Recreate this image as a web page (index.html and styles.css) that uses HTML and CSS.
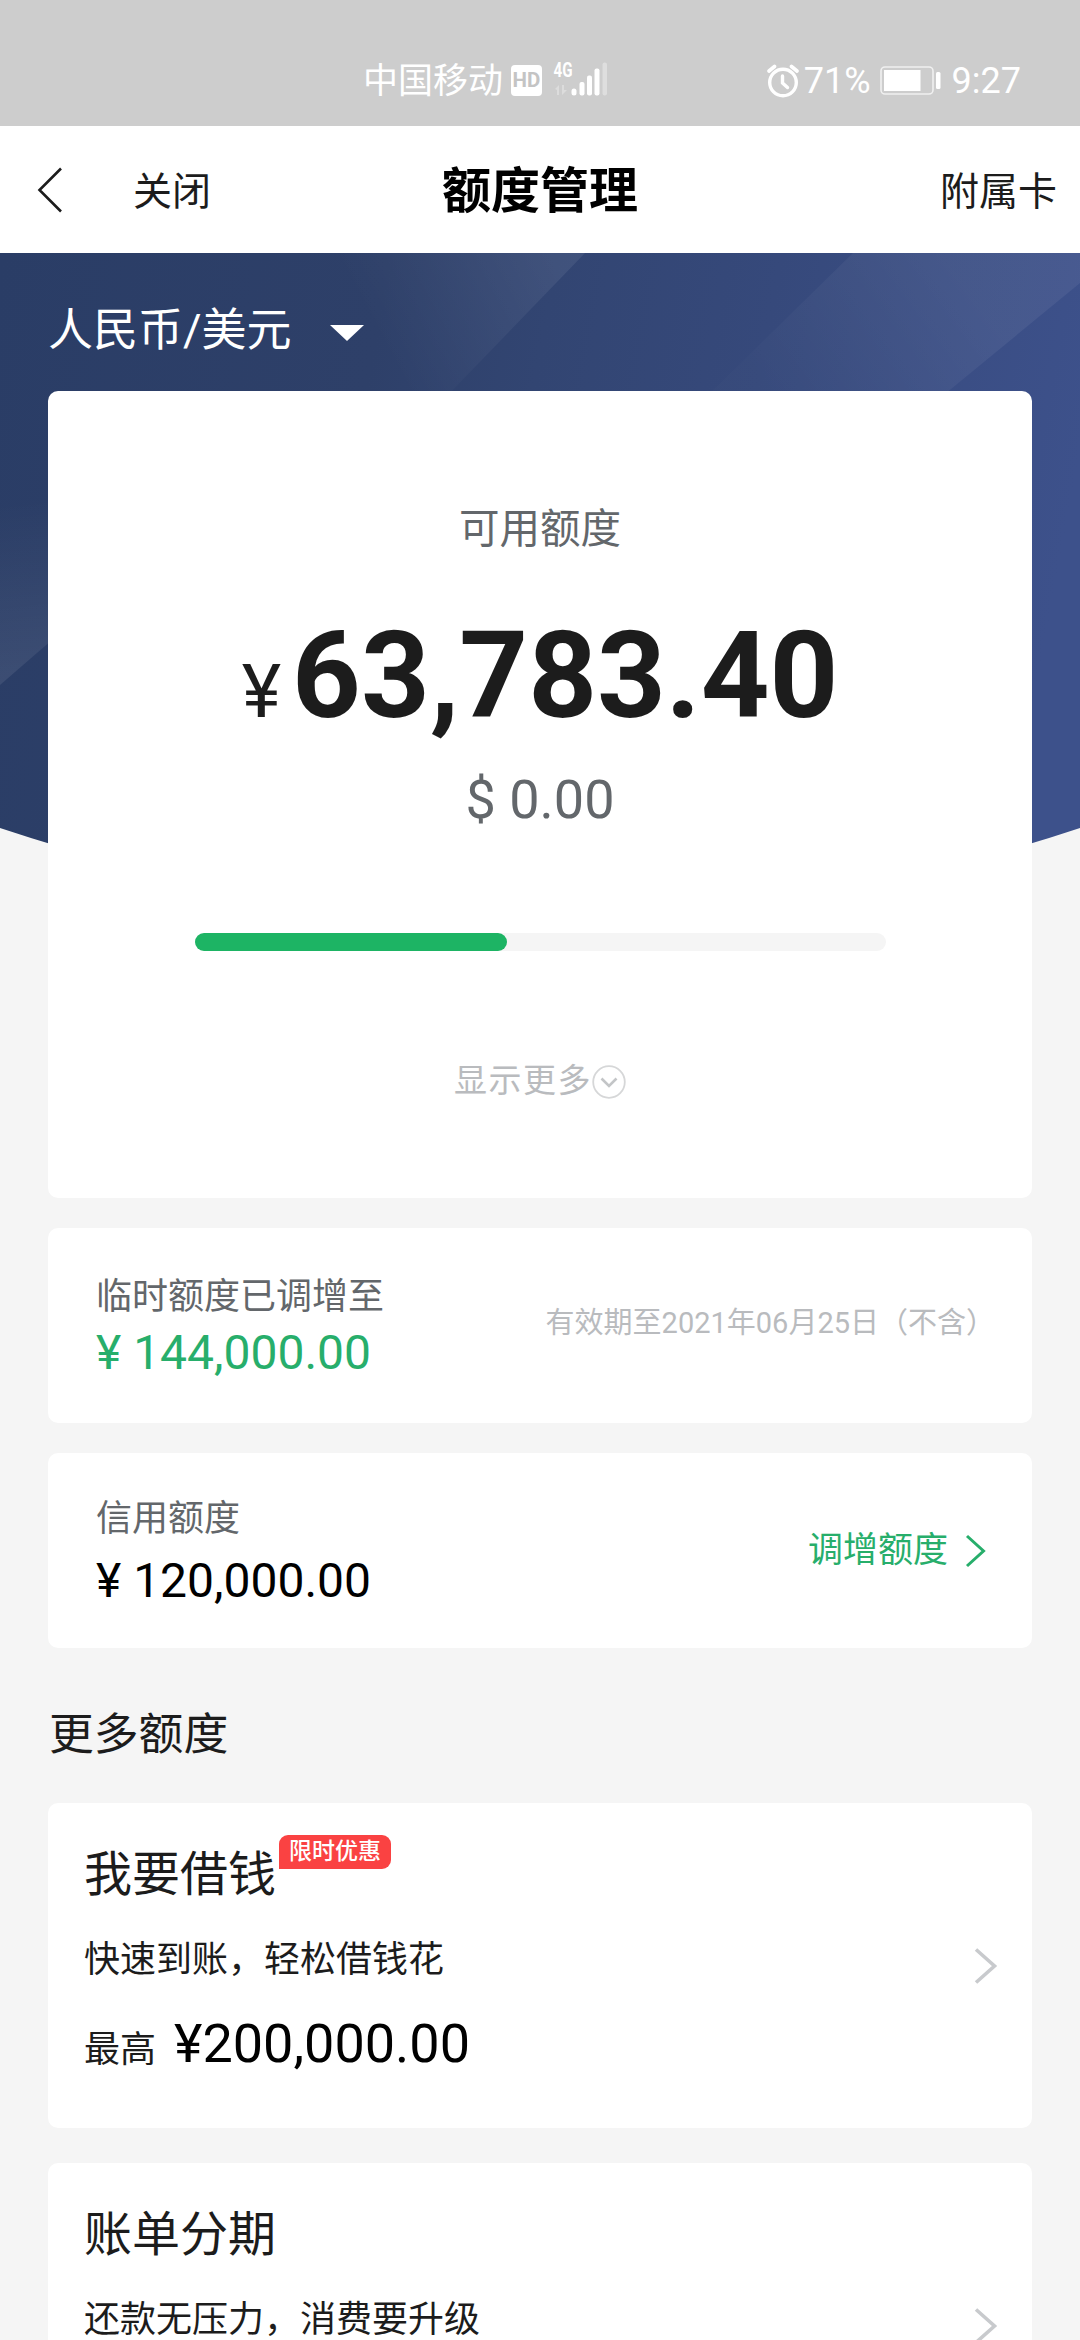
FILE: index.html
```html
<!DOCTYPE html>
<html lang="zh-CN">
<head>
<meta charset="utf-8">
<title>额度管理</title>
<link rel="stylesheet" href="styles.css">
</head>
<body>
<div class="screen">
  <header class="status">
    <div class="status-left">
      <span class="carrier">中国移动</span>
      <span class="hd">HD</span>
      <svg class="signal" width="56" height="38" viewBox="0 0 56 38">
        <text class="net" x="0.500" y="15.500" textLength="19" lengthAdjust="spacingAndGlyphs">4G</text>
        <g fill="#fff">
          <path opacity=".3" d="M2 28l4-4v10H4v-5zM9 24h2v5h3l-5 5z"/>
          <rect x="18.500" y="27.500" width="5" height="7" rx="2.500"/>
          <rect x="26.500" y="21" width="5" height="13.500" rx="2"/>
          <rect x="34" y="14.500" width="5" height="20" rx="2"/>
          <rect x="41.500" y="7.500" width="5" height="27" rx="2"/>
          <rect opacity=".35" x="49.500" y="1.500" width="4.500" height="33" rx="2"/>
        </g>
      </svg>
    </div>
    <div class="status-right">
      <svg class="alarm" width="34" height="34" viewBox="0 0 34 34" fill="none" stroke="#fff" stroke-linecap="round">
        <circle cx="17" cy="18.500" r="13.300" stroke-width="3.400"/>
        <path stroke-width="3.400" d="M16.500 12v7l5 4.500"/>
        <path stroke-width="3.600" d="M3 7l5.500-4.500M31 7l-5.500-4.500"/>
      </svg>
      <span class="pct">71%</span>
      <svg class="battery" width="62" height="30" viewBox="0 0 62 30">
        <rect x="1" y="1" width="52" height="27" rx="4" fill="none" stroke="#f0f0f0" stroke-width="1.600"/>
        <rect x="4" y="4" width="36.500" height="21" fill="#fff"/>
        <rect x="56" y="6" width="4.500" height="17" rx="1.500" fill="#fff"/>
      </svg>
      <span class="clock">9:27</span>
    </div>
  </header>

  <nav class="nav">
    <div class="nav-left">
      <svg width="26" height="46" viewBox="0 0 26 46" fill="none" stroke="#1c1c1c" stroke-width="2.600"><path d="M24 1.500L2.500 23L24 44.500"/></svg>
      <span>关闭</span>
    </div>
    <h1 class="title">额度管理</h1>
    <div class="nav-right">附属卡</div>
  </nav>

  <main class="page">
    <svg class="hero" width="1080" height="680" viewBox="0 0 1080 680">
      <defs>
        <linearGradient id="base" gradientUnits="userSpaceOnUse" x1="0" y1="0" x2="1080" y2="200">
          <stop offset="0" stop-color="#2a3d66"/><stop offset=".35" stop-color="#2e4069"/><stop offset=".5" stop-color="#324572"/><stop offset=".7" stop-color="#36497b"/><stop offset="1" stop-color="#3d518b"/>
        </linearGradient>
        <linearGradient id="beam" gradientUnits="userSpaceOnUse" x1="390" y1="110" x2="560" y2="20">
          <stop offset="0" stop-color="#fff" stop-opacity="0"/><stop offset="1" stop-color="#fff" stop-opacity=".07"/>
        </linearGradient>
        <linearGradient id="beam2" gradientUnits="userSpaceOnUse" x1="760" y1="130" x2="940" y2="0">
          <stop offset="0" stop-color="#fff" stop-opacity=".01"/><stop offset="1" stop-color="#fff" stop-opacity=".06"/>
        </linearGradient>
        <linearGradient id="beam3" gradientUnits="userSpaceOnUse" x1="0" y1="250" x2="20" y2="420">
          <stop offset="0" stop-color="#fff" stop-opacity="0"/><stop offset="1" stop-color="#fff" stop-opacity=".08"/>
        </linearGradient>
        <clipPath id="bowl"><path d="M0 0H1080V575Q540 755 0 575Z"/></clipPath>
      </defs>
      <g clip-path="url(#bowl)">
        <path fill="url(#base)" d="M0 0h1080v680H0z"/>
        <path fill="url(#beam)" d="M200 0H585L445 145H200z"/>
        <path fill="url(#beam2)" d="M853 0H1080V30L940 145H705z"/>
        <path fill="url(#beam3)" d="M0 200H60V380L0 432z"/>
      </g>
    </svg>

    <div class="currency">
      <span>人民币/美元</span>
      <svg width="34" height="16" viewBox="0 0 34 16"><path fill="#fff" d="M0 0h34L17 16z"/></svg>
    </div>

    <section class="card summary">
      <div class="label">可用额度</div>
      <div class="total"><span class="yen">¥</span><b>63,783.40</b></div>
      <div class="usd">$ 0.00</div>
      <div class="bar"><div class="bar-fill" style="width: 45.2%"></div></div>
      <div class="more">
        <span>显示更多</span>
        <svg width="34" height="34" viewBox="0 0 34 34" fill="none"><circle cx="17" cy="17" r="15.800" stroke="#d6d7d8" stroke-width="1.800"/><path d="M9.500 13.500l7.500 7.500 7.500-7.500" stroke="#c3c5c7" stroke-width="2.600"/></svg>
      </div>
    </section>

    <section class="card limit temp">
      <div class="limit-main">
        <div class="limit-name">临时额度已调增至</div>
        <div class="limit-sum green">¥ 144,000.00</div>
      </div>
      <div class="expiry">有效期至2021年06月25日（不含）</div>
    </section>

    <section class="card limit credit">
      <div class="limit-main">
        <div class="limit-name">信用额度</div>
        <div class="limit-sum">¥ 120,000.00</div>
      </div>
      <div class="adjust green">
        <span>调增额度</span>
        <svg width="22" height="34" viewBox="0 0 22 34" fill="none" stroke="#27ae6b" stroke-width="3"><path d="M2 2l16.500 15L2 32"/></svg>
      </div>
    </section>

    <h2 class="section">更多额度</h2>

    <section class="card offer">
      <div class="offer-main">
        <div class="offer-title"><span>我要借钱</span><span class="badge">限时优惠</span></div>
        <div class="offer-desc">快速到账，轻松借钱花</div>
        <div class="offer-max"><span>最高</span><strong>¥200,000.00</strong></div>
      </div>
      <svg width="24" height="36" viewBox="0 0 24 36" fill="none" stroke="#c8cacd" stroke-width="3.600"><path d="M2 1.500l18.500 16.500L2 34.500"/></svg>
    </section>

    <section class="card offer">
      <div class="offer-main">
        <div class="offer-title"><span>账单分期</span></div>
        <div class="offer-desc">还款无压力，消费要升级</div>
      </div>
      <svg width="24" height="36" viewBox="0 0 24 36" fill="none" stroke="#c8cacd" stroke-width="3.600"><path d="M2 1.500l18.500 16.500L2 34.500"/></svg>
    </section>
  </main>
</div>
</body>
</html>
```

FILE: styles.css
```css
* { box-sizing: border-box; }

body {
  margin: 0;
  background: #f5f5f5;
}

.screen {
  width: 1080px;
  height: 2340px;
  overflow: hidden;
  font-family: Roboto, "Noto Sans CJK SC", sans-serif;
  color: #1c1c1c;
  white-space: nowrap;
}

.screen svg {
  display: block;
  flex: none;
}

/* status bar */
.status {
  height: 126px;
  padding: 34px 59px 0 363px;
  display: flex;
  justify-content: space-between;
  background: #cdcdcd;
  color: #fff;
}

.status-left,
.status-right {
  display: flex;
  align-items: center;
}

.status-right { padding-top: 1px; }

.carrier {
  font-size: 35px;
  line-height: 46px;
  padding-top: 3px;
}

.hd {
  width: 31px;
  height: 31px;
  margin: 0 11px 0 8px;
  border-radius: 4px;
  background: #fff;
  color: #c4c4c4;
  font-size: 20.5px;
  font-weight: 700;
  line-height: 31px;
  text-align: center;
}

.screen .signal { overflow: visible; }

.net {
  font-size: 20px;
  font-weight: 700;
  fill: #fff;
}

.alarm { margin-right: 4px; }

.pct,
.clock {
  font-size: 36px;
  line-height: 44px;
}

.pct { margin-right: 9px; }
.clock { margin-left: 10px; }

/* navigation bar */
.nav {
  height: 127px;
  padding: 0 23px 0 37px;
  display: grid;
  grid-template-columns: 1fr auto 1fr;
  align-items: center;
  background: #fff;
  font-size: 39px;
}

.nav-left {
  display: flex;
  align-items: center;
  gap: 70px;
  margin-right: -14px;
}

.nav-left span { margin-top: -3px; }

.nav-right {
  margin-top: -3px;
  text-align: right;
}

.title {
  margin: 0;
  padding: 5px 14px 0 0;
  font-size: 49px;
  line-height: 60px;
  font-weight: 700;
  color: #000;
}

/* page */
.page {
  position: relative;
  padding: 48px 48px 0;
}

.hero {
  position: absolute;
  top: 0;
  left: 0;
  z-index: -1;
}

.currency {
  height: 60px;
  margin-bottom: 30px;
  display: flex;
  align-items: center;
  gap: 38px;
  font-size: 45px;
  line-height: 60px;
  color: #fff;
}

.currency svg { margin-top: 3px; }

.card {
  background: #fff;
  border-radius: 10px;
}

.green { color: #27ae6b; }

/* available limit */
.summary {
  height: 807px;
  padding-top: 108px;
  display: flex;
  flex-direction: column;
  align-items: center;
}

.label {
  font-size: 40.5px;
  line-height: 60px;
  color: #63676b;
}

.total {
  height: 120px;
  margin-top: 57px;
  display: flex;
  align-items: baseline;
  gap: 11px;
  font-size: 120px;
  line-height: 120px;
}

.yen {
  font-size: 75px;
  line-height: 75px;
}

.usd {
  margin-top: 34px;
  font-size: 54px;
  line-height: 60px;
  color: #63676b;
}

.bar {
  width: 691px;
  height: 18px;
  margin-top: 103px;
  border-radius: 9px;
  background: #f5f5f5;
}

.bar-fill {
  height: 18px;
  border-radius: 9px;
  background: #1db464;
}

.more {
  margin-top: 110px;
  display: flex;
  align-items: center;
  font-size: 33px;
  letter-spacing: 1.5px;
  line-height: 40px;
  color: #b9bbbe;
}

.more svg { margin-top: 2px; }

/* limit rows */
.limit {
  height: 195px;
  margin-top: 30px;
  padding: 0 48px;
  display: flex;
  justify-content: space-between;
}

.limit-name {
  font-size: 36px;
  line-height: 44px;
  color: #63676b;
}

.limit-sum {
  font-size: 48px;
  line-height: 48px;
}

.temp .limit-main { padding-top: 47px; }
.temp .limit-sum { margin-top: 10px; }
.credit .limit-main { padding-top: 44px; }

.credit .limit-sum {
  margin-top: 16px;
  color: #000;
}

.expiry {
  align-self: center;
  margin: -11px -11px 0 0;
  font-size: 29px;
  color: #b9bbbe;
}

.adjust {
  display: flex;
  align-items: center;
  gap: 17px;
  margin-right: -3px;
  font-size: 35px;
}

.adjust span { margin-top: -8px; }

/* more limits */
.section {
  margin: 57px 0 38px;
  padding-left: 1px;
  font-size: 44.8px;
  font-weight: 400;
  line-height: 60px;
}

.offer {
  height: 325px;
  padding: 0 34px 0 36px;
  display: flex;
  align-items: center;
  justify-content: space-between;
}

.offer + .offer { margin-top: 35px; }

.offer-main {
  height: 325px;
  padding-top: 42px;
}

.offer-title {
  display: flex;
  align-items: flex-start;
  font-size: 48px;
  line-height: 60px;
}

.badge {
  height: 34px;
  margin: -10px 0 0 3px;
  padding: 0 10px;
  border-radius: 9px 9px 9px 0;
  background: #fa4242;
  color: #fff;
  font-size: 23px;
  font-weight: 500;
  line-height: 33px;
}

.offer-desc {
  margin-top: 35px;
  font-size: 36px;
  line-height: 40px;
}

.offer-max {
  height: 54px;
  margin-top: 37px;
  display: flex;
  align-items: baseline;
  gap: 18px;
  font-size: 36px;
  line-height: 54px;
}

.offer-max strong {
  font-size: 54px;
  font-weight: 400;
  color: #000;
}
```
